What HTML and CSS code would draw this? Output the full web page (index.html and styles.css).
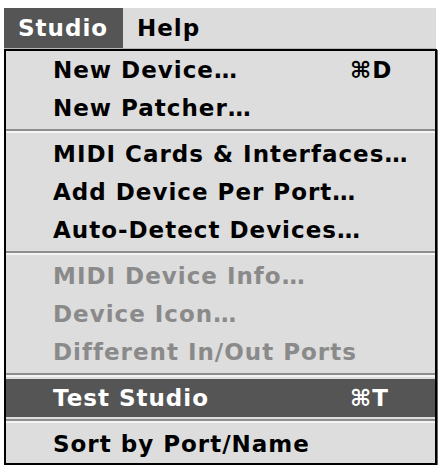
FILE: index.html
```html
<!DOCTYPE html>
<html>
<head>
<meta charset="utf-8">
<link rel="stylesheet" href="styles.css">
</head>
<body>
<div class="screen">
  <div class="menubar">
    <div class="title title-active">Studio</div>
    <div class="title">Help</div>
  </div>
  <div class="menu">
    <div class="item"><span class="label">New Device…</span><span class="key">⌘D</span></div>
    <div class="item"><span class="label">New Patcher…</span></div>
    <div class="sep"></div>
    <div class="item"><span class="label">MIDI Cards &amp; Interfaces…</span></div>
    <div class="item"><span class="label">Add Device Per Port…</span></div>
    <div class="item"><span class="label">Auto-Detect Devices…</span></div>
    <div class="sep"></div>
    <div class="item disabled"><span class="label">MIDI Device Info…</span></div>
    <div class="item disabled"><span class="label">Device Icon…</span></div>
    <div class="item disabled"><span class="label">Different In/Out Ports</span></div>
    <div class="sep"></div>
    <div class="item selected"><span class="label">Test Studio</span><span class="key">⌘T</span></div>
    <div class="sep"></div>
    <div class="item"><span class="label">Sort by Port/Name</span></div>
  </div>
</div>
</body>
</html>
```
FILE: styles.css
```css
html, body {
  margin: 0;
  padding: 0;
  background: #ffffff;
}
body {
  font-family: "DejaVu Sans", "Liberation Sans", sans-serif;
  font-weight: bold;
  font-size: 23px;
  letter-spacing: 1px;
  color: #000;
}
.screen {
  padding: 8px 0 0 4px;
}
.menubar {
  width: 432px;
  height: 40px;
  background: #dcdcdc;
  border-bottom: 1px solid #b8b8b8;
  display: flex;
}
.title {
  line-height: 40px;
  padding-left: 14px;
}
.title-active {
  width: 105px;
  background: #555555;
  color: #ffffff;
}
.menu {
  width: 429px;
  background: #dddddd;
  border: 2px solid #000;
  box-shadow: 1px 1px 0 #666;
}
.item {
  height: 38px;
  line-height: 38px;
  display: flex;
  padding-left: 47px;
  white-space: nowrap;
}
.label {
  flex: 1;
}
.key {
  width: 85px;
}
.disabled {
  color: #8a8a8a;
}
.selected {
  background: #555555;
  color: #ffffff;
}
.sep {
  height: 8px;
  display: flex;
  flex-direction: column;
  justify-content: center;
}
.sep::before {
  content: "";
  display: block;
  height: 2px;
  background: #8e8e8e;
}
.sep::after {
  content: "";
  display: block;
  height: 2px;
  background: #f4f4f4;
}
```
